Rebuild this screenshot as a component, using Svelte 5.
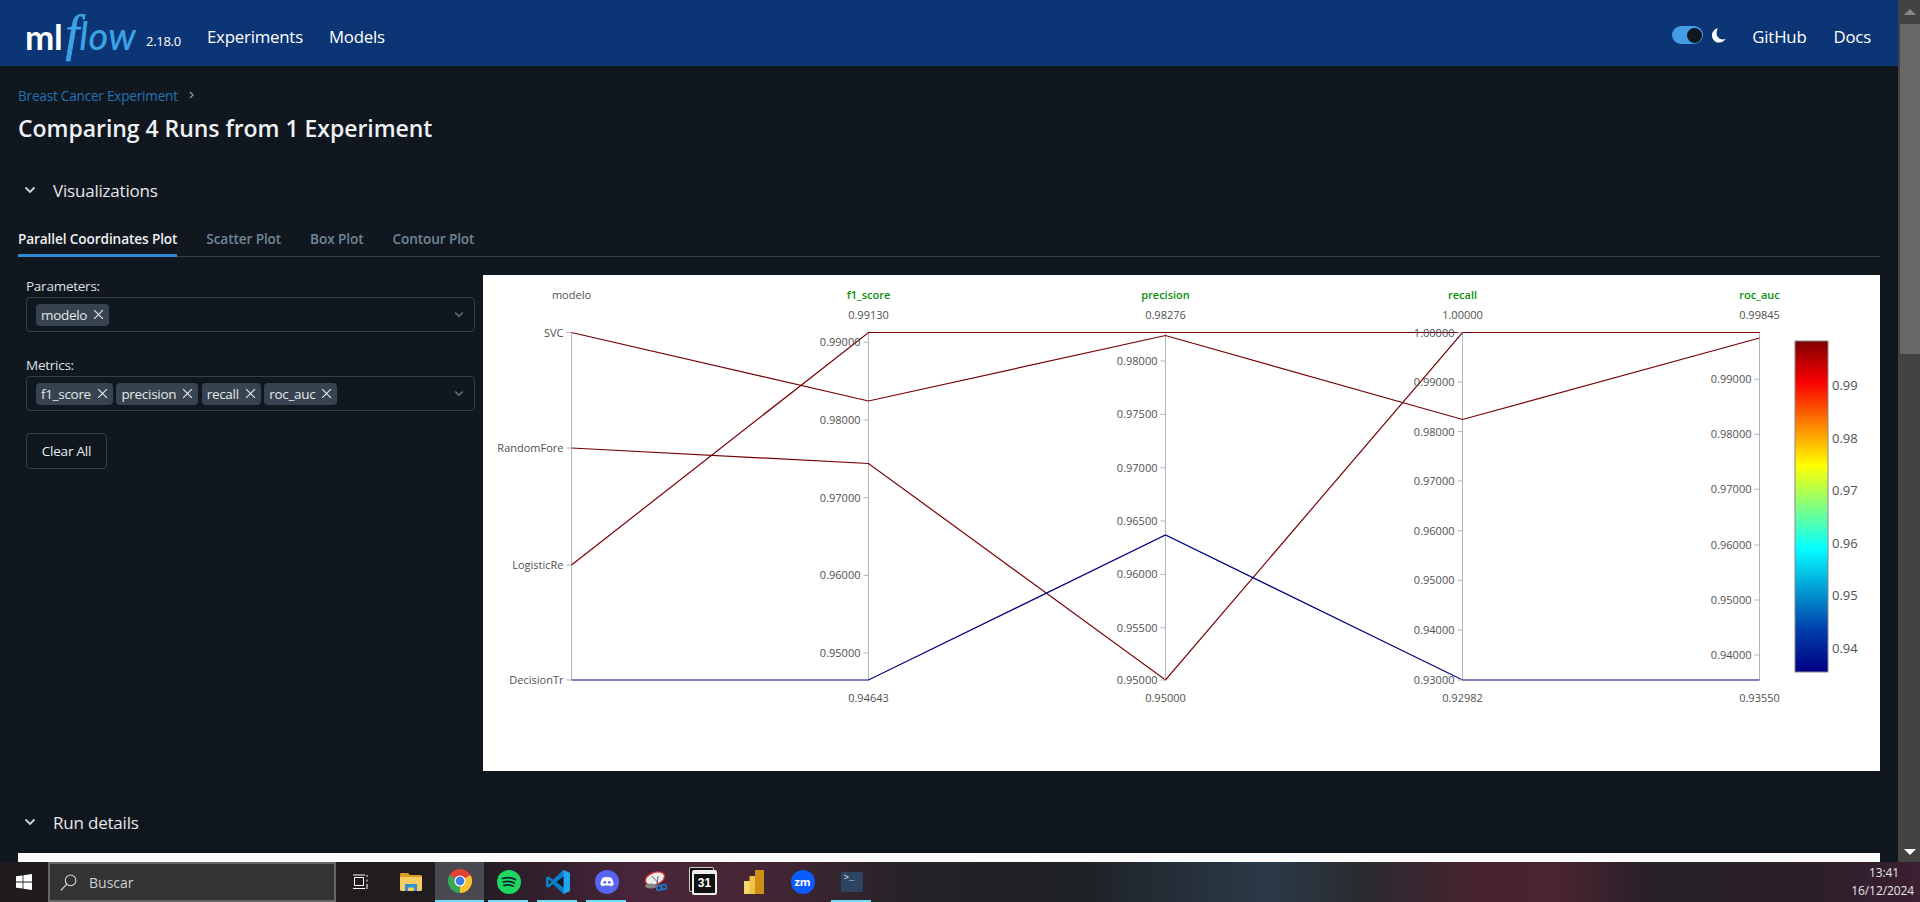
<script>
  const axes = [
    { x: 571.5, title: 'modelo', green: false, max: '', min: '', ticks: [[332.5,'SVC'],[448,'RandomFore'],[565,'LogisticRe'],[680,'DecisionTr']] },
    { x: 868.5, title: 'f1_score', green: true, max: '0.99130', min: '0.94643', ticks: [[342.3,'0.99000'],[420,'0.98000'],[497.7,'0.97000'],[575.4,'0.96000'],[653,'0.95000']] },
    { x: 1165.5, title: 'precision', green: true, max: '0.98276', min: '0.95000', ticks: [[361,'0.98000'],[414.3,'0.97500'],[467.7,'0.97000'],[521,'0.96500'],[574.4,'0.96000'],[627.7,'0.95500'],[680,'0.95000']] },
    { x: 1462.5, title: 'recall', green: true, max: '1.00000', min: '0.92982', ticks: [[332.5,'1.00000'],[382,'0.99000'],[431.6,'0.98000'],[481,'0.97000'],[530.7,'0.96000'],[580.3,'0.95000'],[630,'0.94000'],[680,'0.93000']] },
    { x: 1759.5, title: 'roc_auc', green: true, max: '0.99845', min: '0.93550', ticks: [[379.3,'0.99000'],[434.3,'0.98000'],[489.3,'0.97000'],[545,'0.96000'],[600,'0.95000'],[655,'0.94000']] }
  ];
  const series = [
    { c: '#760006', y: [332.5, 401, 335.5, 419.5, 338] },
    { c: '#760006', y: [448, 463.5, 680, 332.5, 332.5] },
    { c: '#760006', y: [565, 332.5, 332.5, 332.5, 332.5] },
    { c: '#00007e', y: [680, 680, 535, 680, 680] }
  ];
  const pts = (s) => s.y.map((y, i) => axes[i].x + ',' + y).join(' ');
  const cbTicks = [[385.3,'0.99'],[438.3,'0.98'],[490.5,'0.97'],[543.5,'0.96'],[595.5,'0.95'],[648.5,'0.94']];
  const metrics = ['f1_score', 'precision', 'recall', 'roc_auc'];
  const tabs = ['Parallel Coordinates Plot', 'Scatter Plot', 'Box Plot', 'Contour Plot'];
</script>

{#snippet chevron()}
  <svg class="chev" viewBox="0 0 12 8" width="12" height="8"><path d="M1.5 1.5 6 6l4.5-4.5" fill="none" stroke="currentColor" stroke-width="1.8"/></svg>
{/snippet}
{#snippet cross()}
  <svg class="x" viewBox="0 0 12 12" width="11" height="11"><path d="M1.2 1.2 10.8 10.8M10.8 1.2 1.2 10.8" fill="none" stroke="currentColor" stroke-width="1.3"/></svg>
{/snippet}

<div class="screen">
  <div class="window">
    <div class="page">
      <header class="top">
        <div class="logo"><span class="ml">ml</span><span class="ff">f</span><span class="flow">low</span></div>
        <span class="ver">2.18.0</span>
        <nav class="nav"><a>Experiments</a><a>Models</a></nav>
        <div class="right">
          <span class="toggle"><span class="knob"></span></span>
          <svg class="moon" viewBox="0 0 14 15" width="14" height="15"><path d="M6 0.3C2.6 .8 0 3.8 0 7.4c0 4 3.2 7.2 7.2 7.2 2.8 0 5.2-1.6 6.4-3.9-.8.5-1.8.7-2.8.7-3.4 0-6.2-2.8-6.2-6.2 0-1.9.5-3.6 1.4-4.9z" fill="#fff"/></svg>
          <a class="gh">GitHub</a><a>Docs</a>
        </div>
      </header>

      <main class="content">
        <div class="crumb"><a>Breast Cancer Experiment</a><svg viewBox="0 0 6 10" width="5" height="8"><path d="M1 1l4 4-4 4" fill="none" stroke="#9aa7b3" stroke-width="1.4"/></svg></div>
        <h1>Comparing 4 Runs from 1 Experiment</h1>

        <div class="section first">{@render chevron()}<span>Visualizations</span></div>

        <div class="tabs">
          {#each tabs as t, i}<div class="tab" class:active={i === 0}>{t}</div>{/each}
        </div>

        <div class="viz">
          <aside class="side">
            <div class="lab l1">Parameters:</div>
            <div class="select">
              <span class="tag">modelo{@render cross()}</span>
              <span class="sel-chev">{@render chevron()}</span>
            </div>
            <div class="lab l2">Metrics:</div>
            <div class="select">
              {#each metrics as m}<span class="tag">{m}{@render cross()}</span>{/each}
              <span class="sel-chev">{@render chevron()}</span>
            </div>
            <button class="clear">Clear All</button>
          </aside>

          <svg class="plot" viewBox="483 275 1397 496" width="1397" height="496">
            <defs>
              <linearGradient id="jet" x1="0" y1="1" x2="0" y2="0">
                <stop offset="0" stop-color="rgb(0,0,131)"/>
                <stop offset=".125" stop-color="rgb(0,60,170)"/>
                <stop offset=".375" stop-color="rgb(5,255,255)"/>
                <stop offset=".625" stop-color="rgb(255,255,0)"/>
                <stop offset=".875" stop-color="rgb(250,0,0)"/>
                <stop offset="1" stop-color="rgb(128,0,0)"/>
              </linearGradient>
            </defs>
            <rect x="483" y="275" width="1397" height="496" fill="#fff"/>
            {#each axes as a}
              <line x1={a.x} x2={a.x} y1="332.5" y2="680" stroke="#b5b5b5"/>
            {/each}
            {#each series as s}
              <polyline points={pts(s)} fill="none" stroke={s.c} stroke-width="1.2"/>
            {/each}
            {#each axes as a}
              {#each a.ticks as t}
                <line x1={a.x - 5} x2={a.x} y1={t[0]} y2={t[0]} stroke="#b5b5b5"/>
                <text x={a.x - 8} y={t[0] + 4} text-anchor="end" class="t">{t[1]}</text>
              {/each}
              <text x={a.x} y="299" text-anchor="middle" class="t" class:g={a.green}>{a.title}</text>
              {#if a.max}
                <text x={a.x} y="319" text-anchor="middle" class="t">{a.max}</text>
                <text x={a.x} y="702" text-anchor="middle" class="t">{a.min}</text>
              {/if}
            {/each}
            <rect x="1795" y="341" width="33" height="331" fill="url(#jet)" stroke="#888" stroke-width="1"/>
            {#each cbTicks as t}
              <text x="1832" y={t[0] + 4.5} class="cb">{t[1]}</text>
            {/each}
          </svg>
        </div>

        <div class="section second">{@render chevron()}<span>Run details</span></div>
        <div class="table"></div>
      </main>
    </div>

    <div class="scrollbar">
      <div class="sb-btn"><span class="up"></span></div>
      <div class="thumb"></div>
      <div class="sb-space"></div>
      <div class="sb-btn"><span class="down"></span></div>
    </div>
  </div>

  <footer class="taskbar">
    <div class="start">
      <svg viewBox="0 0 16 16" width="16" height="16"><path d="M0 2.3 6.6 1.4V7.6H0zM7.4 1.3 16 0V7.6H7.4zM0 8.4H6.6V14.6L0 13.7zM7.4 8.4H16V16L7.4 14.7z" fill="#fff"/></svg>
    </div>
    <div class="search">
      <svg viewBox="0 0 16 16" width="17" height="17"><circle cx="10" cy="6" r="5" fill="none" stroke="#ddd" stroke-width="1"/><path d="M6.4 9.6 .8 15.4" stroke="#ddd" stroke-width="1.1"/></svg>
      <span>Buscar</span>
    </div>
    <div class="tile">
      <svg viewBox="0 0 16 16" width="16" height="16" class="tv"><path d="M2.5 3.5h9v8h-9zM1 1h12M1 14.5h12M15 1v2M15 5.5v2M15 10v5" fill="none" stroke="#fff" stroke-width="1"/></svg>
    </div>
    <div class="tile">
      <svg viewBox="0 0 22 18" width="22" height="18"><path d="M0 1.5C0 .7.7 0 1.5 0H8l2 2h10.500c.8 0 1.500.7 1.500 1.500V5H0z" fill="#d99c1f"/><path d="M0 4h22v12.500c0 .8-.7 1.500-1.500 1.500h-19C.7 18 0 17.300 0 16.500z" fill="#f5cd61"/><path d="M5 11h12v7h-3v-3.500H8V18H5z" fill="#2f8fd6"/></svg>
    </div>
    <div class="tile chrome">
      <svg viewBox="0 0 24 24" width="24" height="24">
        <path d="M12 12 1.6 6A12 12 0 0 1 22.400 6z" fill="#e34133"/>
        <path d="M12 12 22.400 6A12 12 0 0 1 12 24z" fill="#fbc02d"/>
        <path d="M12 12 12 24A12 12 0 0 1 1.600 6z" fill="#3aa757"/>
        <circle cx="12" cy="12" r="5.600" fill="#fff"/><circle cx="12" cy="12" r="4.400" fill="#3b7de8"/>
      </svg>
    </div>
    <div class="tile on">
      <svg viewBox="0 0 24 24" width="24" height="24"><circle cx="12" cy="12" r="12" fill="#1ed760"/><path d="M5.500 8.500c4.500-1.300 9-1 13 1.100M6.300 12c3.800-1 7.700-.8 11 1M7 15.300c3.200-.8 6.300-.6 9.200 .9" fill="none" stroke="#123" stroke-width="1.800" stroke-linecap="round"/></svg>
    </div>
    <div class="tile on">
      <svg viewBox="0 0 24 24" width="24" height="24"><path d="M17.500 0 24 3v18l-6.500 3L7 14.200 2.500 17.800 0 16.500V7.500L2.500 6.200 7 9.800z" fill="#0a7fc9"/><path d="M17.500 0 24 3v18l-6.500 3z" fill="#22a5ee"/><path d="M17.500 6.500V17.500L10.300 12z" fill="#151a20"/><path d="M2.700 9.300V14.700L5.500 12z" fill="#151a20"/></svg>
    </div>
    <div class="tile on">
      <svg viewBox="0 0 24 24" width="24" height="24"><circle cx="12" cy="12" r="12" fill="#5865f2"/><path d="M7.600 7.800c2.800-1 6-1 8.800 0 1.300 2 2.100 4.200 2.200 7-1 .8-2.100 1.300-3.200 1.600l-.8-1.200c-1.700.5-3.500.5-5.200 0l-.8 1.200c-1.100-.3-2.200-.8-3.200-1.600.1-2.800.9-5 2.200-7z" fill="#fff"/><circle cx="9.700" cy="12.300" r="1.400" fill="#5865f2"/><circle cx="14.300" cy="12.300" r="1.400" fill="#5865f2"/></svg>
    </div>
    <div class="tile">
      <svg viewBox="0 0 24 24" width="24" height="24"><ellipse cx="11" cy="8.500" rx="10" ry="6" transform="rotate(-20 11 8.500)" fill="#eee" stroke="#d33" stroke-width="1.300"/><ellipse cx="7" cy="16" rx="6" ry="2.500" fill="#888"/><path d="M8 6l8 9M14 6l-1 8" stroke="#666" stroke-width="1"/><circle cx="15" cy="18" r="2.400" fill="none" stroke="#1c7fd0" stroke-width="1.500"/><circle cx="20" cy="17" r="2.400" fill="none" stroke="#1c7fd0" stroke-width="1.500"/></svg>
    </div>
    <div class="tile">
      <div class="cal"><span>31</span></div>
    </div>
    <div class="tile">
      <svg viewBox="0 0 20 24" width="20" height="24"><rect x="0" y="11" width="9" height="13" fill="#f2d76c"/><rect x="5.500" y="6" width="9" height="18" fill="#eec344"/><rect x="11" y="0" width="9" height="24" fill="#cf8f16"/></svg>
    </div>
    <div class="tile">
      <div class="zm">zm</div>
    </div>
    <div class="tile on">
      <div class="term"><span>&gt;_</span></div>
    </div>
    <div class="clock"><div>13:41</div><div>16/12/2024</div></div>
  </footer>
</div>

<style>
  :global(body) { margin: 0; background: #11171e; overflow: hidden; }
  .screen { width: 1920px; height: 902px; display: flex; flex-direction: column; font-family: "Open Sans", "Noto Sans", sans-serif; color: #e8ecf0; overflow: hidden; }
  .window { height: 862px; display: flex; }
  .page { width: 1898px; height: 862px; overflow: hidden; background: #11171e; }

  .top { height: 66px; background: #0b3574; display: flex; align-items: center; padding: 0 27px 0 25px; box-sizing: border-box; color: #fff; }
  .logo { width: 116px; display: flex; align-items: baseline; height: 56px; white-space: nowrap; }
  .ml { font: 700 35px/56px Lato, sans-serif; letter-spacing: -.3px; color: #fff; }
  .ff { font: italic 400 50px/56px "Liberation Serif", serif; color: #3ba3e6; -webkit-text-stroke: .7px #3ba3e6; margin-left: 3px; }
  .flow { font: italic 500 38px/56px Lato, sans-serif; color: #3ba3e6; letter-spacing: .4px; }
  .ver { font-size: 13px; margin: 16px 0 0 5px; width: 61px; letter-spacing: -.3px; }
  .nav { display: flex; gap: 26px; font-size: 16.800px; margin-top: 6px; letter-spacing: -.2px; }
  .right { margin-left: auto; display: flex; align-items: center; font-size: 16.800px; letter-spacing: -.2px; }
  .right a { margin-top: 6px; }
  .toggle { width: 31px; height: 18px; border-radius: 9px; background: #439ce4; display: flex; justify-content: flex-end; align-items: center; padding-right: 1px; box-sizing: border-box; margin-top: 4px; }
  .knob { width: 15px; height: 15px; border-radius: 50%; background: #11171e; }
  .moon { margin: 4px 0 0 9px; }
  .gh { margin: 0 27px 0 26px; }

  .content { padding: 19px 18px 0; }
  .crumb { height: 20px; display: flex; align-items: center; gap: 11px; font-size: 13.600px; color: #2272b4; letter-spacing: -.22px; }
  h1 { margin: 7px 0 0; font-size: 23px; line-height: 32px; font-weight: 600; color: #eef1f4; letter-spacing: -.04px; }
  .section { height: 24px; display: flex; align-items: center; font-size: 17px; letter-spacing: -.2px; color: #e4e8ec; }
  .section .chev { margin: 0 17px 0 6px; color: #d0d6dc; }
  .section.first { margin-top: 34px; }
  .section.second { margin-top: 39px; }
  .tabs { margin-top: 21px; height: 34px; box-sizing: border-box; display: flex; gap: 29px; border-bottom: 1px solid #333f4a; }
  .tab { font-size: 13.650px; font-weight: 600; color: #6f8698; line-height: 32px; height: 34px; box-sizing: border-box; letter-spacing: -.12px; }
  .tab.active { color: #eef1f4; border-bottom: 3px solid #2e88d8; }

  .viz { margin-top: 18px; display: flex; height: 496px; }
  .side { width: 465px; padding-left: 8px; box-sizing: border-box; flex: none; display: flex; flex-direction: column; align-items: flex-start; }
  .lab { font-size: 13.500px; line-height: 20px; letter-spacing: -.25px; color: #dde2e7; margin-bottom: 1px; }
  .l1 { margin-top: 1px; }
  .l2 { margin-top: 23px; }
  .select { width: 449px; height: 35px; box-sizing: border-box; border: 1px solid #333f4a; border-radius: 4px; display: flex; align-items: center; gap: 3.500px; padding-left: 9px; font-size: 13.500px; letter-spacing: -.3px; }
  .tag { height: 22px; background: #37434f; border-radius: 4px; display: flex; align-items: center; padding: 0 5px; gap: 6px; color: #e3e7eb; }
  .sel-chev { margin-left: auto; margin-right: 10px; color: #66737f; display: flex; }
  .sel-chev .chev { width: 10px; height: 7px; }
  .clear { margin-top: 22px; height: 36px; width: 81px; background: transparent; border: 1px solid #333f4a; border-radius: 4px; color: #e8ecf0; font: 13.500px "Open Sans", sans-serif; letter-spacing: -.2px; padding: 0; }

  .plot { display: block; flex: none; }
  .t { font: 11px "Open Sans", sans-serif; fill: #505050; }
  .t.g { fill: #0a8f0a; font-weight: 600; }
  .cb { font: 13px "Open Sans", sans-serif; fill: #505050; }

  .table { margin-top: 19px; height: 9px; width: 1862px; background: #fafafa; }

  .scrollbar { width: 22px; height: 862px; background: #434343; display: flex; flex-direction: column; }
  .sb-btn { height: 24px; display: flex; align-items: center; justify-content: center; flex: none; }
  .up { width: 0; height: 0; border: 6px solid transparent; border-top: 0; border-bottom: 6px solid #868686; margin-left: 1px; }
  .down { width: 0; height: 0; border: 6px solid transparent; border-bottom: 0; border-top: 6px solid #fff; margin-left: 1px; margin-top: 4px; }
  .thumb { height: 330px; margin-left: 2px; background: #686868; flex: none; }
  .sb-space { flex: 1; }

  .taskbar { height: 40px; display: flex; align-items: center; position: relative; color: #fff;
    background: linear-gradient(90deg, #1f1b1e 0, #201c20 24%, #48243a 33%, #4a2736 38%, #242226 48%, #1e2125 56%, #2b3a48 66%, #2a2a30 71%, #47232f 77%, #4a2433 81%, #262126 86%, #2b1f29 94%, #3b2032 100%); }
  .start { width: 48px; display: flex; justify-content: center; }
  .search { width: 288px; height: 40px; box-sizing: border-box; background: #333; border: 2px solid #666; display: flex; align-items: center; padding-left: 10px; gap: 12px; font: 14px "Open Sans", sans-serif; color: #d0d0d0; margin-right: 1px; }
  .tile { width: 49px; height: 40px; display: flex; align-items: center; justify-content: center; flex: none; position: relative; box-sizing: border-box; }
  .tv { margin-right: 4px; }
  .chrome { background: #4a4850; border-bottom: 2px solid #6fdcf9; }
  .on::after { content: ""; position: absolute; left: 4px; right: 5px; bottom: 0; height: 2px; background: #6fdcf9; }
  .cal { width: 21px; height: 19px; border: 2px solid #eee; background: #111; border-top-width: 4px; border-radius: 2px; display: flex; align-items: center; justify-content: center; font: 700 12px/1 "Liberation Sans", sans-serif; color: #fff; box-shadow: -3px -3px 0 -1px #111, -3px -3px 0 0 #ccc; }
  .zm { width: 24px; height: 24px; border-radius: 50%; background: #0b5cff; color: #fff; font: 700 11px/23px "Open Sans", sans-serif; text-align: center; }
  .term { width: 22px; height: 20px; background: #2d4460; border-radius: 2px; color: #dde; font: 9px/12px "Liberation Mono", monospace; box-sizing: border-box; padding-left: 3px; }
  .clock { margin-left: auto; margin-right: 6px; text-align: right; font: 12px/18px "Open Sans", sans-serif; color: #e6e6e6; letter-spacing: -.1px; }
  .clock div:first-child { margin-right: 15px; }
</style>
